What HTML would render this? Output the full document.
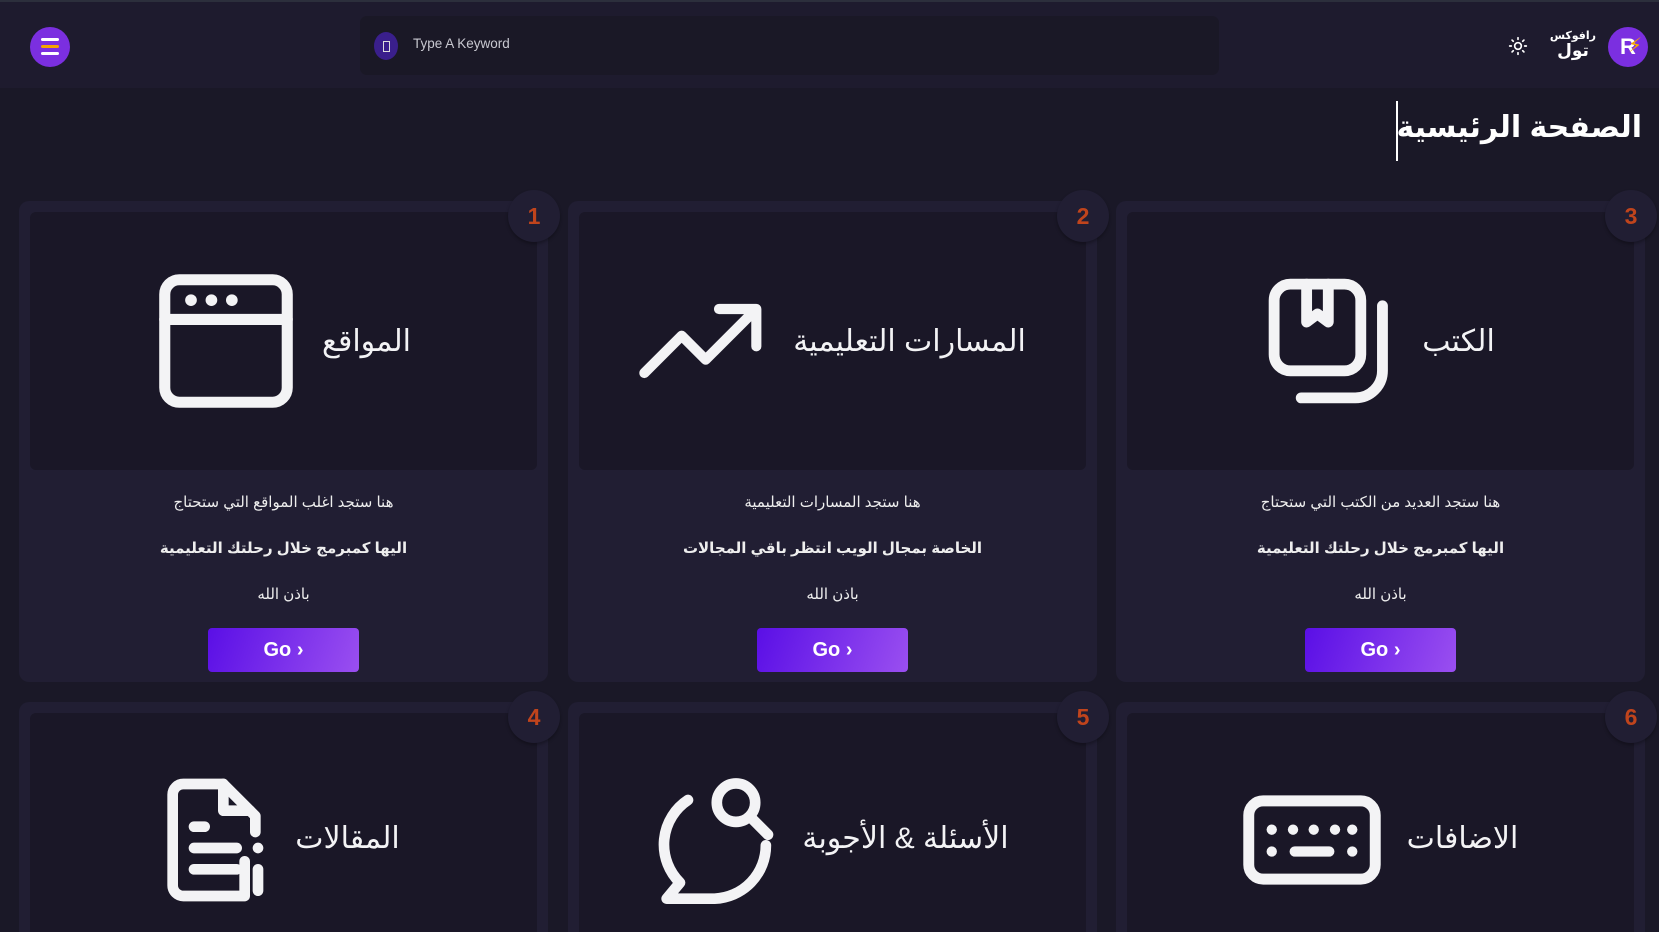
<!DOCTYPE html>
<html><head><meta charset="utf-8">
<style>
*{box-sizing:border-box;margin:0;padding:0}
html,body{width:1659px;height:932px;overflow:hidden;background:#1a1827;font-family:"Liberation Sans","DejaVu Sans",sans-serif;color:#fff}
.wrap{position:relative;width:1659px;height:932px;overflow:hidden}
.top{position:absolute;left:0;top:0;width:1659px;height:2px;background:#2c2f3c}
header{position:absolute;left:0;top:2px;width:1659px;height:86px;background:#1e1b2e}
.ham{position:absolute;left:30px;top:25px;width:40px;height:40px;border-radius:50%;background:#7b2fe0}
.ham i{position:absolute;left:11px;width:18px;height:3px;border-radius:2px;background:#fff}
.search{position:absolute;left:360px;top:14px;width:859px;height:59px;border-radius:7px;background:#1a1826}
.search .ic{position:absolute;left:14px;top:16px;width:24px;height:28px;border-radius:50%;background:#3a1f8c}
.search .ic:after{content:"";position:absolute;left:9px;top:9px;width:5px;height:9px;border:1px solid #ddd}
.search span{position:absolute;left:53px;top:20px;font-size:13.5px;color:#c8c8d0}
.logo{position:absolute;left:1608px;top:25px;width:40px;height:40px;border-radius:50%;background:#7b2fe0;font-weight:bold;font-size:22px;text-align:center;line-height:40px}
.logo b{color:#fff}.logo em{position:absolute;left:20px;top:-1px;color:#f5a400;font-style:normal;font-size:20px}
.brand{position:absolute;left:1550px;top:28px;width:46px;text-align:center;font-size:11px;line-height:12px;font-weight:bold}
.brand .b2{font-size:17px;line-height:18px}
.sun{position:absolute;left:1508px;top:34px}
h1{position:absolute;right:17px;top:110px;font-size:30px;font-weight:bold;direction:rtl}
.vl{position:absolute;left:1396px;top:101px;width:2px;height:60px;background:#fff}
.card{position:absolute;width:529px;height:481px;background:#211e33;border-radius:10px}
.panel{position:absolute;left:11px;top:11px;width:507px;height:258px;background:#1a1727;border-radius:6px;display:flex;align-items:center;justify-content:center;gap:26px}
.panel .t{font-size:30px;direction:rtl;white-space:nowrap;color:#f3f3f5}
.num{position:absolute;right:-12px;top:-11px;width:52px;height:52px;border-radius:50%;background:#211e33;box-shadow:0 2px 3px rgba(0,0,0,.3);color:#c0441c;font-size:23px;font-weight:bold;text-align:center;line-height:52px}
.tx{position:absolute;left:0;width:100%;text-align:center;direction:rtl;font-size:15px;color:#eee}
.go{position:absolute;left:189px;top:427px;width:151px;height:44px;border-radius:4px;background:linear-gradient(110deg,#5a0fe6,#9a4ff0);text-align:center;line-height:44px;font-weight:bold;font-size:20px}
.r2{height:230px;border-radius:10px 10px 0 0}
.r2 .panel{height:258px;align-items:flex-start;padding-top:47px;border-radius:6px 6px 0 0}
</style></head><body><div class="wrap">
<div class="top"></div>
<header>
<div class="ham"><i style="top:11px"></i><i style="top:18px;background:#f5a400"></i><i style="top:25px"></i></div>
<div class="search"><div class="ic"></div><span>Type A Keyword</span></div>
<svg class="sun" width="20" height="20" viewBox="0 0 24 24" fill="none" stroke="#fff" stroke-width="2" stroke-linecap="round"><circle cx="12" cy="12" r="4"/><path d="M12 2v2M12 20v2M4.9 4.9l1.4 1.4M17.7 17.7l1.4 1.4M2 12h2M20 12h2M4.9 19.1l1.4-1.4M17.7 6.3l1.4-1.4"/></svg>
<div class="brand" dir="rtl"><div>رافوكس</div><div class="b2">تول</div></div>
<div class="logo"><b>R</b><em>⚡</em></div>
</header>
<div class="vl"></div>
<h1>الصفحة الرئيسية</h1>

<div class="card" style="left:19px;top:201px">
<div class="panel"><svg width="140" height="140" viewBox="0 0 24 24" fill="none" stroke="#f3f3f5" stroke-width="1.9" stroke-linecap="round" stroke-linejoin="round"><rect x="1.5" y="1.5" width="21" height="21" rx="2.5"/><path d="M1.5 8.3h21"/><g fill="#f3f3f5" stroke="none"><circle cx="6" cy="5" r="1"/><circle cx="9.5" cy="5" r="1"/><circle cx="13" cy="5" r="1"/></g></svg><div class="t">المواقع</div></div>
<div class="num">1</div>
<div class="tx" style="top:292px">هنا ستجد اغلب المواقع التي ستحتاج</div>
<div class="tx" style="top:338px;font-weight:bold">اليها كمبرمج خلال رحلتك التعليمية</div>
<div class="tx" style="top:384px">باذن الله</div>
<div class="go">Go ›</div>
</div>

<div class="card" style="left:568px;top:201px">
<div class="panel"><svg width="128" height="76" viewBox="0 0 24 14" fill="none" stroke="#f3f3f5" stroke-width="1.9" stroke-linecap="round" stroke-linejoin="round"><path d="M1 13l7-7 4.5 4.5L22 1M15 1h7v7"/></svg><div class="t">المسارات التعليمية</div></div>
<div class="num">2</div>
<div class="tx" style="top:292px">هنا ستجد المسارات التعليمية</div>
<div class="tx" style="top:338px;font-weight:bold">الخاصة بمجال الويب انتظر باقي المجالات</div>
<div class="tx" style="top:384px">باذن الله</div>
<div class="go">Go ›</div>
</div>

<div class="card" style="left:1116px;top:201px">
<div class="panel"><svg width="130" height="130" viewBox="0 0 24 24" fill="none" stroke="#f3f3f5" stroke-width="2" stroke-linecap="round" stroke-linejoin="round"><rect x="1.5" y="1.5" width="16" height="16" rx="3"/><path d="M7.5 1.5v7l2-1.5 2 1.5v-7"/><path d="M21.5 5.5v12a5 5 0 0 1-5 5h-10"/></svg><div class="t">الكتب</div></div>
<div class="num">3</div>
<div class="tx" style="top:292px">هنا ستجد العديد من الكتب التي ستحتاج</div>
<div class="tx" style="top:338px;font-weight:bold">اليها كمبرمج خلال رحلتك التعليمية</div>
<div class="tx" style="top:384px">باذن الله</div>
<div class="go">Go ›</div>
</div>

<div class="card r2" style="left:19px;top:702px">
<div class="panel" style="padding-top:63px"><svg width="102" height="128" viewBox="0 0 19 24" fill="none" stroke="#f3f3f5" stroke-width="2" stroke-linecap="round" stroke-linejoin="round"><path d="M14.5 16V22.5H3a2 2 0 0 1-2-2V3.5a2 2 0 0 1 2-2h7.5l6 6v3"/><path d="M10.5 1.5v5h5"/><path d="M5 9.5h2M5 13.5h8M5 17.5h8M17 13.5v0M17 17.5v4"/></svg><div class="t" style="margin-top:45px">المقالات</div></div>
<div class="num">4</div>
</div>

<div class="card r2" style="left:568px;top:702px">
<div class="panel" style="padding-top:63px"><svg width="120" height="128" viewBox="0 0 22.5 24" fill="none" stroke="#f3f3f5" stroke-width="2" stroke-linecap="round" stroke-linejoin="round"><path d="M6 4.5A10 10 0 0 0 4.5 20L2 23h9a10 10 0 0 0 9.6-10"/><circle cx="15" cy="5" r="3.6"/><path d="M17.6 7.6l3.4 3.4"/></svg><div class="t" style="margin-top:45px">الأسئلة &amp; الأجوبة</div></div>
<div class="num">5</div>
</div>

<div class="card r2" style="left:1116px;top:702px">
<div class="panel" style="padding-top:82px"><svg width="138" height="90" viewBox="0 0 24 15.6" fill="none" stroke="#f3f3f5" stroke-width="1.9" stroke-linecap="round" stroke-linejoin="round"><rect x="1" y="1" width="22" height="13.6" rx="2.5"/><g fill="#f3f3f5" stroke="none"><circle cx="5" cy="6" r=".9"/><circle cx="8.7" cy="6" r=".9"/><circle cx="12.3" cy="6" r=".9"/><circle cx="16" cy="6" r=".9"/><circle cx="19" cy="6" r=".9"/><circle cx="5" cy="9.8" r=".9"/><circle cx="19" cy="9.8" r=".9"/></g><path d="M9 9.8h6" stroke-width="1.8"/></svg><div class="t" style="margin-top:26px">الاضافات</div></div>
<div class="num">6</div>
</div>
</div></body></html>
